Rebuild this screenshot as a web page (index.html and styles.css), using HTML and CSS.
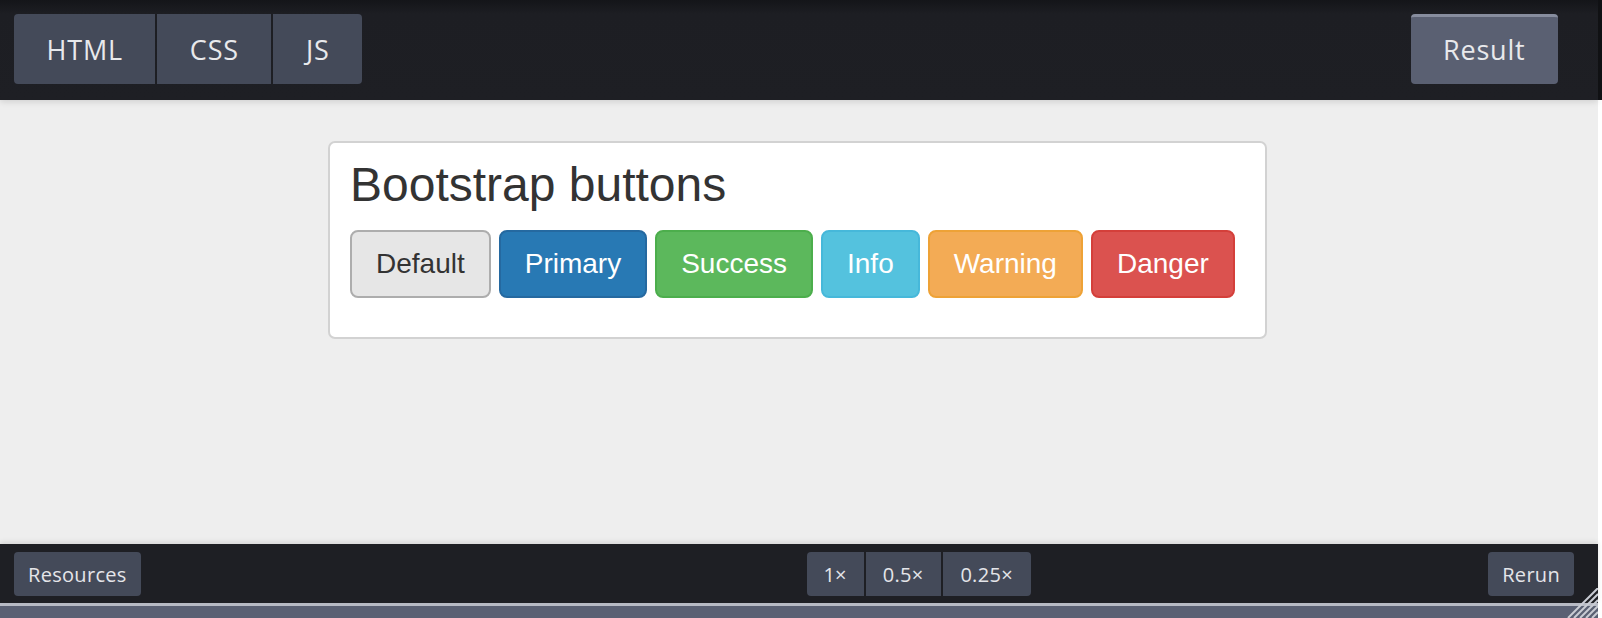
FILE: index.html
```html
<!DOCTYPE html>
<html lang="en">
<head>
<meta charset="utf-8">
<title>Bootstrap buttons</title>
<link rel="stylesheet" href="styles.css">
</head>
<body>
<div class="frame">
  <div class="app">
    <header class="topbar">
      <nav class="tabs">
        <span class="tab">HTML</span>
        <span class="tab">CSS</span>
        <span class="tab">JS</span>
      </nav>
      <span class="tab result">Result</span>
    </header>
    <main class="stage">
      <section class="card">
        <h1 class="title">Bootstrap buttons</h1>
        <div class="btn-row">
          <button class="btn btn-default">Default</button>
          <button class="btn btn-primary">Primary</button>
          <button class="btn btn-success">Success</button>
          <button class="btn btn-info">Info</button>
          <button class="btn btn-warning">Warning</button>
          <button class="btn btn-danger">Danger</button>
        </div>
      </section>
    </main>
    <footer class="bottombar">
      <span class="pill">Resources</span>
      <div class="speeds">
        <span class="pill seg seg-a">1×</span>
        <span class="pill seg seg-b">0.5×</span>
        <span class="pill seg seg-c">0.25×</span>
      </div>
      <span class="pill rerun">Rerun</span>
    </footer>
    <div class="baseline-strip"></div>
    <svg class="resize" width="36" height="30" viewBox="0 0 36 30" aria-hidden="true">
      <g stroke="#c9ccd4" stroke-width="2">
        <line x1="6" y1="30" x2="36" y2="0"/>
        <line x1="12" y1="30" x2="36" y2="6"/>
        <line x1="18" y1="30" x2="36" y2="12"/>
        <line x1="24" y1="30" x2="36" y2="18"/>
        <line x1="30" y1="30" x2="36" y2="24"/>
      </g>
    </svg>
  </div>
  <div class="edge"><div class="edge-top"></div></div>
</div>
</body>
</html>
```

FILE: styles.css
```css
* { box-sizing: border-box; }

html, body {
  margin: 0;
  padding: 0;
  background: #ffffff;
}

.frame {
  display: flex;
  width: 1602px;
  height: 618px;
  overflow: hidden;
}

.app {
  position: relative;
  width: 1598px;
  height: 618px;
  display: flex;
  flex-direction: column;
  font-family: "Open Sans", "DejaVu Sans", sans-serif;
}

.edge {
  width: 4px;
  background: #ffffff;
}
.edge-top {
  height: 100px;
  background: #111215;
}

/* ---------- top bar ---------- */
.topbar {
  height: 100px;
  flex: none;
  display: flex;
  align-items: flex-start;
  justify-content: space-between;
  padding: 14px 40px 0 14px;
  background: linear-gradient(#141519 0px, #1d1e23 14px, #1e1f24 100%);
  position: relative;
  z-index: 1;
  box-shadow: 0 2px 6px rgba(0, 0, 0, 0.12);
}

.tabs {
  display: flex;
  gap: 2px;
  border-radius: 4px;
  overflow: hidden;
}

.tab {
  height: 70px;
  display: flex;
  align-items: center;
  padding: 0 32.5px;
  background: #444a59;
  color: #e8e9ec;
  font-size: 27px;
  font-weight: 500;
  letter-spacing: 0.8px;
}

.tab.result {
  background: #5a6072;
  border-top: 3px solid #878d9e;
  border-radius: 4px;
  padding-bottom: 3px;
}

/* ---------- stage ---------- */
.stage {
  flex: none;
  height: 444px;
  background: #eeeeee;
  padding-top: 41px;
}

.card {
  width: 939px;
  height: 198px;
  margin-left: 328px;
  background: #ffffff;
  border: 2px solid #d2d2d2;
  border-radius: 7px;
  padding: 16px 20px 0 20px;
}

.title {
  margin: 0;
  font-family: "Liberation Sans", Arial, sans-serif;
  font-weight: 400;
  font-size: 48px;
  line-height: 52.8px;
  color: #333333;
}

.btn-row {
  display: flex;
  gap: 8px;
  margin-top: 18px;
}

.btn {
  font-family: "Liberation Sans", Arial, sans-serif;
  font-size: 28px;
  line-height: 40px;
  padding: 12px 24px;
  border: 2px solid transparent;
  border-radius: 8px;
  color: #ffffff;
  background: #cccccc;
  margin: 0;
}

.btn-default { background: #e6e6e6; border-color: #adadad; color: #333333; }
.btn-primary { background: #2879b4; border-color: #2569a0; }
.btn-success { background: #5cb85c; border-color: #4cae4c; }
.btn-info    { background: #54c2de; border-color: #46b8da; }
.btn-warning { background: #f3ab55; border-color: #eea236; }
.btn-danger  { background: #db524f; border-color: #d43f3a; }

/* ---------- bottom bar ---------- */
.bottombar {
  height: 59px;
  flex: none;
  display: flex;
  align-items: flex-start;
  padding: 8px 24px 0 14px;
  background: #1e1f24;
  box-shadow: 0 -2px 5px rgba(0, 0, 0, 0.10);
  position: relative;
}

.pill {
  height: 44px;
  display: flex;
  align-items: center;
  padding: 0 14px;
  background: #444a59;
  color: #e4e5e9;
  font-size: 20px;
  font-weight: 500;
  letter-spacing: 0.3px;
  border-radius: 4px;
}

.speeds {
  display: flex;
  gap: 2px;
  margin-left: 666px;
  border-radius: 4px;
  overflow: hidden;
}
.pill.seg {
  border-radius: 0;
  justify-content: center;
  padding: 0;
}
.seg-a { width: 57px; }
.seg-b { width: 75px; }
.seg-c { width: 88px; }

.rerun {
  margin-left: auto;
}

.baseline-strip {
  flex: 1;
  background: #5a6073;
  border-top: 3px solid #b9bcc6;
}

.resize {
  position: absolute;
  right: 0;
  bottom: 0;
}
```
